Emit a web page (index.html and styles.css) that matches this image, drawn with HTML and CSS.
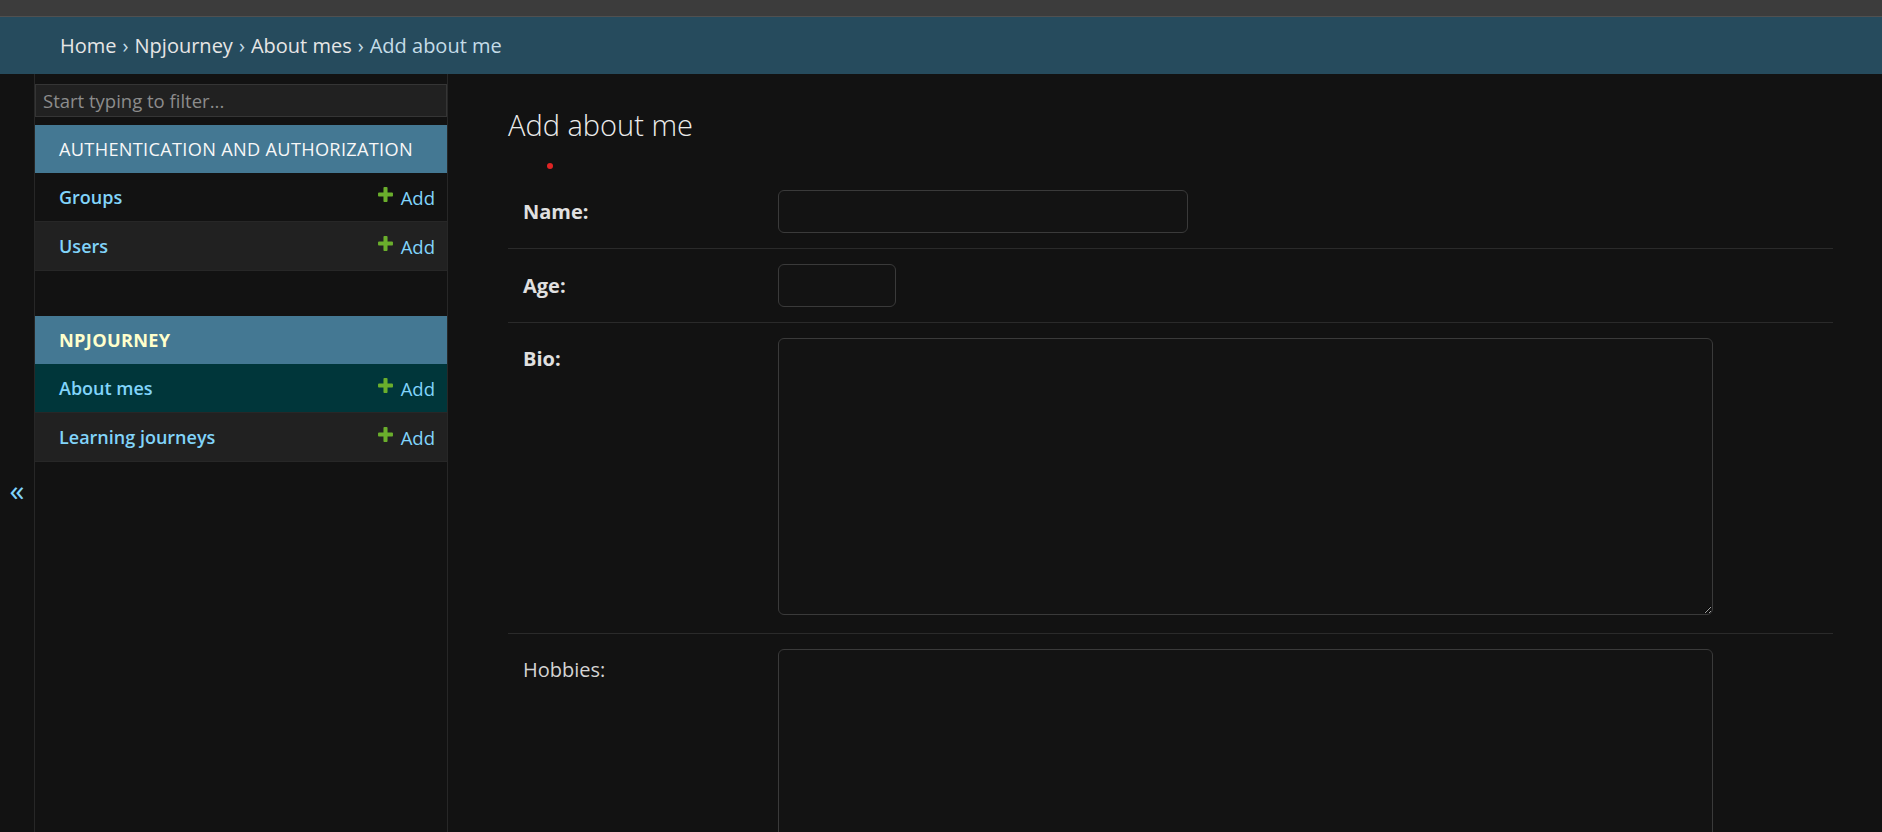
FILE: index.html
```html
<!DOCTYPE html>
<html lang="en">
<head>
<meta charset="utf-8">
<title>Add about me | Django site admin</title>
<link rel="stylesheet" href="styles.css">
</head>
<body>
<div class="topbar"></div>
<nav class="breadcrumbs">
  <a href="#">Home</a><span class="sep">›</span><a href="#">Npjourney</a><span class="sep">›</span><a href="#">About mes</a><span class="sep">›</span><span>Add about me</span>
</nav>
<div class="main">
  <button class="toggle-sidebar" type="button" aria-label="Toggle navigation">«</button>
  <nav class="sidebar">
    <input class="nav-filter" type="search" placeholder="Start typing to filter...">
    <div class="module">
      <div class="caption">Authentication and Authorization</div>
      <div class="model-row">
        <a class="model-link" href="#">Groups</a>
        <a class="addlink" href="#"><svg class="plus" viewBox="0 0 1792 1792" aria-hidden="true"><path d="M1600 796v192q0 40-28 68t-68 28h-416v416q0 40-28 68t-68 28h-192q-40 0-68-28t-28-68v-416h-416q-40 0-68-28t-28-68v-192q0-40 28-68t68-28h416v-416q0-40 28-68t68-28h192q40 0 68 28t28 68v416h416q40 0 68 28t28 68z"/></svg>Add</a>
      </div>
      <div class="model-row alt">
        <a class="model-link" href="#">Users</a>
        <a class="addlink" href="#"><svg class="plus" viewBox="0 0 1792 1792" aria-hidden="true"><path d="M1600 796v192q0 40-28 68t-68 28h-416v416q0 40-28 68t-68 28h-192q-40 0-68-28t-28-68v-416h-416q-40 0-68-28t-28-68v-192q0-40 28-68t68-28h416v-416q0-40 28-68t68-28h192q40 0 68 28t28 68v416h416q40 0 68 28t28 68z"/></svg>Add</a>
      </div>
    </div>
    <div class="module">
      <div class="caption current">Npjourney</div>
      <div class="model-row selected">
        <a class="model-link" href="#">About mes</a>
        <a class="addlink" href="#"><svg class="plus" viewBox="0 0 1792 1792" aria-hidden="true"><path d="M1600 796v192q0 40-28 68t-68 28h-416v416q0 40-28 68t-68 28h-192q-40 0-68-28t-28-68v-416h-416q-40 0-68-28t-28-68v-192q0-40 28-68t68-28h416v-416q0-40 28-68t68-28h192q40 0 68 28t28 68v416h416q40 0 68 28t28 68z"/></svg>Add</a>
      </div>
      <div class="model-row alt">
        <a class="model-link" href="#">Learning journeys</a>
        <a class="addlink" href="#"><svg class="plus" viewBox="0 0 1792 1792" aria-hidden="true"><path d="M1600 796v192q0 40-28 68t-68 28h-416v416q0 40-28 68t-68 28h-192q-40 0-68-28t-28-68v-416h-416q-40 0-68-28t-28-68v-192q0-40 28-68t68-28h416v-416q0-40 28-68t68-28h192q40 0 68 28t28 68v416h416q40 0 68 28t28 68z"/></svg>Add</a>
      </div>
    </div>
  </nav>
  <div class="content">
    <h1>Add about me</h1>
    <div class="note"><span class="dot"></span></div>
    <form class="aligned">
      <fieldset>
        <div class="form-row">
          <label class="required" for="id_name">Name:</label>
          <input id="id_name" class="vTextField" type="text">
        </div>
        <div class="form-row">
          <label class="required" for="id_age">Age:</label>
          <input id="id_age" class="vIntegerField" type="text">
        </div>
        <div class="form-row tall">
          <label class="required" for="id_bio">Bio:</label>
          <textarea id="id_bio" class="vLargeTextField"></textarea>
        </div>
        <div class="form-row tall">
          <label for="id_hobbies">Hobbies:</label>
          <textarea id="id_hobbies" class="vLargeTextField"></textarea>
        </div>
      </fieldset>
    </form>
  </div>
</div>
</body>
</html>
```
FILE: styles.css
```css
html, body {
  margin: 0;
  padding: 0;
  height: 100%;
}
body {
  background: #121212;
  color: #eeeeee;
  font-family: "Open Sans", "Noto Sans", "Liberation Sans", sans-serif;
  overflow: hidden;
}
a {
  text-decoration: none;
}

.topbar {
  height: 16px;
  background: #3c3c3c;
  border-bottom: 1px solid #505050;
}

.breadcrumbs {
  display: flex;
  align-items: center;
  height: 57px;
  padding: 0 60px;
  background: #264b5d;
  color: #c4dce8;
  font-size: 20px;
}
.breadcrumbs a {
  color: #e6e6e6;
}
.breadcrumbs .sep {
  margin: 0 6px;
  color: #c4dce8;
}

.main {
  display: flex;
  height: calc(100vh - 74px);
  overflow: hidden;
}

.toggle-sidebar {
  flex: 0 0 35px;
  width: 35px;
  height: 100vh;
  box-sizing: border-box;
  padding: 0;
  margin: 0;
  border: 0;
  border-right: 1px solid #272727;
  background: #121212;
  color: #81d4fa;
  font-family: "Open Sans", sans-serif;
  font-size: 30px;
  line-height: 1;
  display: flex;
  align-items: center;
  justify-content: center;
}

.sidebar {
  flex: 0 0 412px;
  border-right: 1px solid #272727;
  background: #121212;
  padding-top: 10px;
}

.nav-filter {
  display: block;
  width: 100%;
  box-sizing: border-box;
  height: 33px;
  margin: 0 0 8px;
  padding: 0 7px;
  border: 1px solid #353535;
  background: #212121;
  color: #eeeeee;
  font-family: inherit;
  font-size: 18.5px;
  outline: none;
}
.nav-filter::placeholder {
  color: #8c8c8c;
}

.module {
  margin-bottom: 45px;
}
.caption {
  height: 48px;
  display: flex;
  align-items: center;
  padding-left: 24px;
  background: #447893;
  color: #f7f7f7;
  font-size: 18.2px;
  text-transform: uppercase;
  letter-spacing: 0.3px;
}
.caption.current {
  color: #ffffcc;
  font-weight: 700;
}

.model-row {
  height: 48px;
  display: flex;
  align-items: center;
  justify-content: space-between;
  padding: 0 12px 0 24px;
  border-bottom: 1px solid #272727;
  font-size: 18.5px;
}
.model-row.alt {
  background: #212121;
}
.model-row.selected {
  background: #00363a;
}
.model-link {
  color: #81d4fa;
  font-weight: 600;
  font-size: 18px;
}
.addlink {
  display: flex;
  align-items: center;
  color: #81d4fa;
}
.plus {
  width: 19px;
  height: 19px;
  margin-right: 6px;
  margin-top: -5px;
  fill: #6aae2c;
}

.content {
  flex: 1;
  padding: 33px 49px 0 60px;
  min-width: 0;
}
h1 {
  margin: 0;
  font-size: 29px;
  line-height: 36px;
  font-weight: 300;
  color: #ececec;
}
.note {
  height: 32px;
  padding-left: 39px;
  padding-top: 20px;
  box-sizing: border-box;
}
.dot {
  display: block;
  width: 6px;
  height: 6px;
  border-radius: 50%;
  background: #e02424;
}

fieldset {
  margin: 0;
  padding: 0;
  border: 0;
}
.form-row {
  display: flex;
  align-items: baseline;
  padding: 15px;
  border-bottom: 1px solid #2a2a2a;
}
.form-row.tall {
  padding-bottom: 18px;
}
.form-row label {
  flex: 0 0 240px;
  padding-right: 15px;
  font-size: 20px;
  color: #d4d4d4;
}
.form-row label.required {
  font-weight: 700;
  color: #e0e0e0;
}
input.vTextField,
input.vIntegerField,
textarea {
  box-sizing: border-box;
  margin: 0;
  border: 1px solid #3a3a3a;
  border-radius: 6px;
  background: #131313;
  color: #eeeeee;
  font-family: inherit;
  font-size: 19px;
  outline: none;
}
input.vTextField {
  width: 410px;
  height: 43px;
  padding: 0 9px;
}
input.vIntegerField {
  width: 118px;
  height: 43px;
  padding: 0 9px;
}
textarea {
  width: 935px;
  height: 277px;
  padding: 7px 9px;
  resize: both;
  color-scheme: dark;
}
```
